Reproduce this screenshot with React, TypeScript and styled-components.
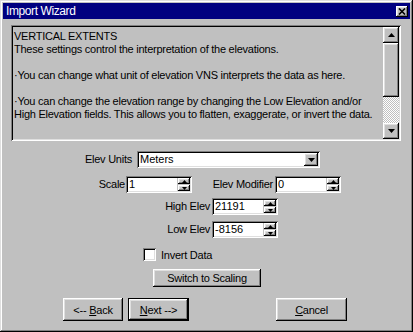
import React from "react";
import styled, { createGlobalStyle, css } from "styled-components";

const GRAY = "#c0c0c0";
const LIGHT = "#dfdfdf";
const DARK = "#808080";
const NAVY = "#000080";

const GlobalStyle = createGlobalStyle`
  html, body {
    margin: 0;
    padding: 0;
    background: ${GRAY};
  }
  * {
    box-sizing: border-box;
  }
`;

const raised = css`
  background: ${GRAY};
  box-shadow: inset -1px -1px #000, inset 1px 1px #fff, inset -2px -2px ${DARK},
    inset 2px 2px ${LIGHT};
`;

const sunken = css`
  box-shadow: inset 1px 1px ${DARK}, inset -1px -1px #fff, inset 2px 2px #000,
    inset -2px -2px ${LIGHT};
`;

const Window = styled.div`
  width: 413px;
  height: 332px;
  padding: 3px;
  display: flex;
  flex-direction: column;
  background: ${GRAY};
  font-family: "Liberation Sans", Arial, sans-serif;
  font-size: 11px;
  color: #000;
  box-shadow: inset -1px -1px #000, inset 1px 1px ${LIGHT}, inset -2px -2px ${DARK},
    inset 2px 2px #fff;
`;

const TitleBar = styled.div`
  height: 16px;
  background: ${NAVY};
  color: #fff;
  display: flex;
  align-items: center;
  justify-content: space-between;
  padding: 0 2px 0 3px;
  font-size: 12px;
  letter-spacing: -0.4px;
`;

const CloseBtn = styled.div`
  ${raised};
  width: 12px;
  height: 11px;
  display: flex;
  align-items: center;
  justify-content: center;
`;

const Body = styled.div`
  padding: 6px 9px 0 8px;
  display: flex;
  flex-direction: column;
`;

const Memo = styled.div`
  ${sunken};
  height: 116px;
  display: flex;
  padding: 2px;
`;

const MemoText = styled.div`
  flex: 1;
  padding: 3px 0 0 1px;
  line-height: 13px;
  white-space: pre;
  letter-spacing: -0.25px;
  overflow: hidden;
`;

const ScrollBar = styled.div`
  width: 16px;
  display: flex;
  flex-direction: column;
`;

const ArrowBtn = styled.div`
  ${raised};
  width: 16px;
  height: 16px;
  display: flex;
  align-items: center;
  justify-content: center;
`;

const Thumb = styled.div`
  ${raised};
  height: 54px;
`;

const Track = styled.div`
  flex: 1;
  background-image: repeating-conic-gradient(#fff 0 25%, ${GRAY} 0 50%);
  background-size: 2px 2px;
`;

const Form = styled.div`
  display: flex;
  flex-direction: column;
`;

const Row = styled.div<{ $top: number }>`
  display: flex;
  align-items: center;
  margin-top: ${(p) => p.$top}px;
`;

const Label = styled.div<{ $w: number; $gap?: number }>`
  width: ${(p) => p.$w}px;
  margin-right: ${(p) => p.$gap ?? 1}px;
  text-align: right;
  white-space: nowrap;
  letter-spacing: -0.25px;
  line-height: 13px;
  margin-top: -1px;
`;

const Field = styled.div<{ $w: number }>`
  ${sunken};
  width: ${(p) => p.$w}px;
  height: 17px;
  padding: 2px;
  display: flex;
  background: ${GRAY};
`;

const FieldValue = styled.div`
  flex: 1;
  background: #fff;
  padding-left: 1px;
  line-height: 13px;
  margin-right: 1px;
`;

const Spinner = styled.div`
  width: 12px;
  display: flex;
  flex-direction: column;
  justify-content: space-between;
`;

const SpinBtn = styled.div`
  ${raised};
  height: 6px;
  display: flex;
  align-items: center;
  justify-content: center;
`;

const Combo = styled.div`
  ${sunken};
  width: 183px;
  height: 17px;
  padding: 2px;
  display: flex;
  background: #fff;
`;

const ComboBtn = styled.div`
  ${raised};
  width: 14px;
  display: flex;
  align-items: center;
  justify-content: center;
`;

const CheckRow = styled.label`
  display: flex;
  align-items: center;
  margin-left: 132px;
  gap: 5px;
  letter-spacing: -0.25px;
`;

const CheckBox = styled.div`
  ${sunken};
  width: 13px;
  height: 13px;
  background: #fff;
`;

const Button = styled.div<{ $w: number; $default?: boolean; $ml: number }>`
  ${raised};
  width: ${(p) => p.$w}px;
  height: 23px;
  margin-left: ${(p) => p.$ml}px;
  display: flex;
  align-items: center;
  justify-content: center;
  letter-spacing: -0.25px;
  white-space: pre;
  ${(p) =>
    p.$default &&
    css`
      box-shadow: inset 0 0 0 1px #000, inset -2px -2px #000, inset 2px 2px #fff,
        inset -3px -3px ${DARK}, inset 3px 3px ${LIGHT};
    `}
`;

const SmallButton = styled(Button)`
  height: 18px;
`;

const ButtonRow = styled.div`
  display: flex;
  align-items: center;
  margin-top: 11px;
`;

const Tri = ({ up, w = 7 }: { up?: boolean; w?: number }) => (
  <svg width={w} height={Math.ceil(w / 2)} viewBox={`0 0 ${w} ${Math.ceil(w / 2)}`}>
    <polygon
      points={
        up
          ? `${w / 2},0 ${w},${Math.ceil(w / 2)} 0,${Math.ceil(w / 2)}`
          : `0,0 ${w},0 ${w / 2},${Math.ceil(w / 2)}`
      }
      fill="#000"
    />
  </svg>
);

const SpinField = ({ w, value }: { w: number; value: string }) => (
  <Field $w={w}>
    <FieldValue>{value}</FieldValue>
    <Spinner>
      <SpinBtn>
        <Tri up w={5} />
      </SpinBtn>
      <SpinBtn>
        <Tri w={5} />
      </SpinBtn>
    </Spinner>
  </Field>
);

const memo = `VERTICAL EXTENTS
These settings control the interpretation of the elevations.

\u00b7You can change what unit of elevation VNS interprets the data as here.

\u00b7You can change the elevation range by changing the Low Elevation and/or
High Elevation fields. This allows you to flatten, exaggerate, or invert the data.`;

export default function App() {
  return (
    <>
      <GlobalStyle />
      <Window>
        <TitleBar>
          <span>Import Wizard</span>
          <CloseBtn>
            <svg width="8" height="7" viewBox="0 0 8 7">
              <path d="M1 0.5 L7 6.5 M7 0.5 L1 6.5" stroke="#000" strokeWidth="1.6" />
            </svg>
          </CloseBtn>
        </TitleBar>
        <Body>
          <Memo>
            <MemoText>{memo}</MemoText>
            <ScrollBar>
              <ArrowBtn>
                <Tri up />
              </ArrowBtn>
              <Thumb />
              <Track />
              <ArrowBtn>
                <Tri />
              </ArrowBtn>
            </ScrollBar>
          </Memo>
          <Form>
            <Row $top={10}>
              <Label $w={121} $gap={5}>
                Elev Units
              </Label>
              <Combo>
                <FieldValue>Meters</FieldValue>
                <ComboBtn>
                  <Tri />
                </ComboBtn>
              </Combo>
            </Row>
            <Row $top={8}>
              <Label $w={114}>Scale</Label>
              <SpinField w={66} value="1" />
              <Label $w={81} $gap={2}>
                Elev Modifier
              </Label>
              <SpinField w={66} value="0" />
            </Row>
            <Row $top={5}>
              <Label $w={199} $gap={2}>
                High Elev
              </Label>
              <SpinField w={66} value="21191" />
            </Row>
            <Row $top={6}>
              <Label $w={199} $gap={2}>
                Low Elev
              </Label>
              <SpinField w={66} value="-8156" />
            </Row>
            <Row $top={10}>
              <CheckRow>
                <CheckBox />
                Invert Data
              </CheckRow>
            </Row>
            <Row $top={8}>
              <SmallButton $w={108} $ml={142}>
                Switch to Scaling
              </SmallButton>
            </Row>
            <ButtonRow>
              <Button $w={60} $ml={52}>
                <span>
                  {"<-- "}
                  <u>B</u>ack
                </span>
              </Button>
              <Button $w={61} $ml={5} $default>
                <span>
                  <u>N</u>
                  {"ext -->"}
                </span>
              </Button>
              <Button $w={71} $ml={87}>
                <span>
                  <u>C</u>ancel
                </span>
              </Button>
            </ButtonRow>
          </Form>
        </Body>
      </Window>
    </>
  );
}
